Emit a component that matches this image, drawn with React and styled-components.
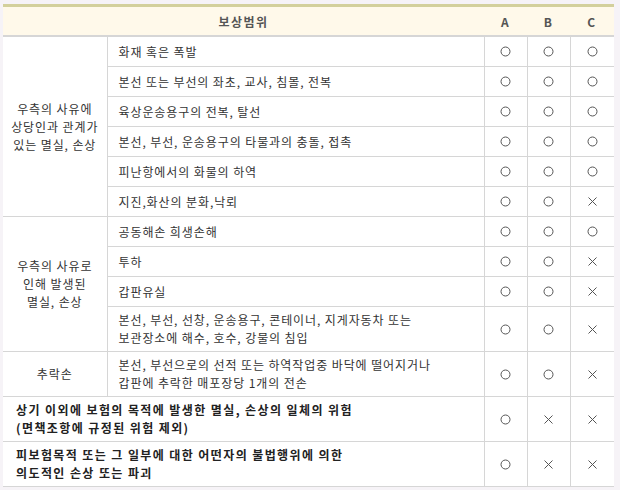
import React from "react";
import styled, { createGlobalStyle } from "styled-components";

const GlobalStyle = createGlobalStyle`
  html, body {
    margin: 0;
    padding: 0;
    background: #f6f3f7;
  }
  body {
    font-family: "Noto Sans CJK KR", "Noto Sans", sans-serif;
    font-size: 12px;
    color: #333;
  }
`;

const Page = styled.div`
  padding: 4px 6px 0 3px;
`;

const Table = styled.table`
  width: 611px;
  border-collapse: collapse;
  table-layout: fixed;
  background: #fff;
  border-top: 3px solid #d3d09c;
`;

const Col = styled.col`
  width: ${(p) => p.$w}px;
`;

const HeadCell = styled.th`
  height: 28px;
  padding: 0;
  background: #fff9ea;
  color: #555;
  font-weight: bold;
  font-size: 12px;
  letter-spacing: 1.5px;
  text-align: center;
  border-bottom: 2px solid #d6d6d6;
`;

const Cell = styled.td`
  padding: 0 ${(p) => p.$pad || "11px"};
  height: ${(p) => (p.$tall ? "44px" : "29px")};
  line-height: 18px;
  letter-spacing: ${(p) => (p.$bold ? "1.4px" : "0.9px")};
  text-align: ${(p) => (p.$center ? "center" : "left")};
  vertical-align: middle;
  font-weight: ${(p) => (p.$bold ? "bold" : "normal")};
  color: ${(p) => (p.$bold ? "#222" : "#333")};
  border-bottom: 1px solid #d6d6d6;
  border-left: ${(p) => (p.$noLeft ? "none" : "1px solid #d6d6d6")};
  white-space: nowrap;
`;

const Mark = styled.td`
  padding: 0;
  text-align: center;
  vertical-align: middle;
  border-bottom: 1px solid #d6d6d6;
  border-left: 1px solid #d6d6d6;
`;

const MarkSvg = styled.svg`
  display: block;
  margin: 0 auto;
  width: 11px;
  height: 11px;
`;

function MarkIcon({ v }) {
  return (
    <MarkSvg viewBox="0 0 11 11">
      {v === "O" ? (
        <circle cx="5.5" cy="5.5" r="4.5" fill="none" stroke="#555" strokeWidth="1" />
      ) : (
        <path d="M1.5 1.5 L9.5 9.5 M9.5 1.5 L1.5 9.5" stroke="#555" strokeWidth="1" fill="none" />
      )}
    </MarkSvg>
  );
}

const groups = [
  {
    title: ["우측의 사유에", "상당인과 관계가", "있는 멸실, 손상"],
    rows: [
      { text: ["화재 혹은 폭발"], m: "OOO" },
      { text: ["본선 또는 부선의 좌초, 교사, 침몰, 전복"], m: "OOO" },
      { text: ["육상운송용구의 전복, 탈선"], m: "OOO" },
      { text: ["본선, 부선, 운송용구의 타물과의 충돌, 접촉"], m: "OOO" },
      { text: ["피난항에서의 화물의 하역"], m: "OOO" },
      { text: ["지진,화산의 분화,낙뢰"], m: "OOX" },
    ],
  },
  {
    title: ["우측의 사유로", "인해 발생된", "멸실, 손상"],
    rows: [
      { text: ["공동해손 희생손해"], m: "OOO" },
      { text: ["투하"], m: "OOX" },
      { text: ["갑판유실"], m: "OOX" },
      {
        text: ["본선, 부선, 선창, 운송용구, 콘테이너, 지게자동차 또는", "보관장소에 해수, 호수, 강물의 침입"],
        m: "OOX",
      },
    ],
  },
  {
    title: ["추락손"],
    rows: [
      {
        text: ["본선, 부선으로의 선적 또는 하역작업중 바닥에 떨어지거나", "갑판에 추락한 매포장당 1개의 전손"],
        m: "OOX",
      },
    ],
  },
];

const extras = [
  { text: ["상기 이외에 보험의 목적에 발생한 멸실, 손상의 일체의 위험", "(면책조항에 규정된 위험 제외)"], m: "OXX" },
  { text: ["피보험목적 또는 그 일부에 대한 어떤자의 불법행위에 의한", "의도적인 손상 또는 파괴"], m: "OXX" },
];

function Lines({ lines }) {
  return lines.map((l, i) => (
    <React.Fragment key={i}>
      {i > 0 && <br />}
      {l}
    </React.Fragment>
  ));
}

function Marks({ m }) {
  return m.split("").map((v, i) => (
    <Mark key={i}>
      <MarkIcon v={v} />
    </Mark>
  ));
}

export default function App() {
  return (
    <Page>
      <GlobalStyle />
      <Table>
        <colgroup>
          <Col $w={104} />
          <Col $w={377} />
          <Col $w={43} />
          <Col $w={43} />
          <Col $w={44} />
        </colgroup>
        <thead>
          <tr>
            <HeadCell colSpan={2}>보상범위</HeadCell>
            <HeadCell>A</HeadCell>
            <HeadCell>B</HeadCell>
            <HeadCell>C</HeadCell>
          </tr>
        </thead>
        <tbody>
          {groups.map((g, gi) =>
            g.rows.map((r, ri) => (
              <tr key={`${gi}-${ri}`}>
                {ri === 0 && (
                  <Cell rowSpan={g.rows.length} $center $noLeft $pad="2px">
                    <Lines lines={g.title} />
                  </Cell>
                )}
                <Cell $tall={r.text.length > 1}>
                  <Lines lines={r.text} />
                </Cell>
                <Marks m={r.m} />
              </tr>
            ))
          )}
          {extras.map((r, i) => (
            <tr key={`x-${i}`}>
              <Cell colSpan={2} $tall $bold $noLeft $pad="13px">
                <Lines lines={r.text} />
              </Cell>
              <Marks m={r.m} />
            </tr>
          ))}
        </tbody>
      </Table>
    </Page>
  );
}
